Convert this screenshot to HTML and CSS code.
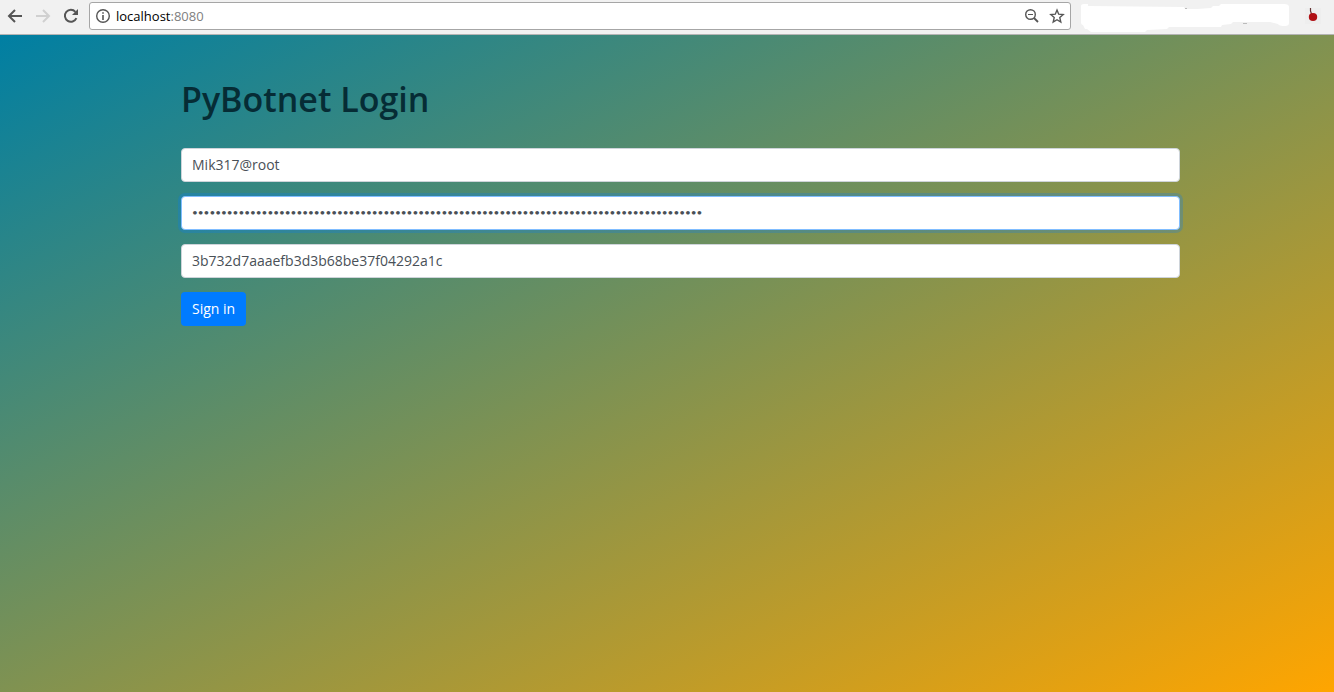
FILE: index.html
```html
<!DOCTYPE html>
<html lang="en">
<head>
<meta charset="utf-8">
<meta name="viewport" content="width=device-width, initial-scale=1">
<title>PyBotnet Login</title>
<link rel="stylesheet" href="styles.css">
</head>
<body>
<header class="toolbar">
  <nav class="nav" aria-label="Browser">
    <button class="tool" type="button" aria-label="Back"><svg width="16" height="16" viewBox="0 0 16 16"><path d="M15 8H2M8 2L2 8l6 6" fill="none" stroke="#555" stroke-width="2"/></svg></button>
    <button class="tool" type="button" aria-label="Forward" disabled><svg width="16" height="16" viewBox="0 0 16 16"><path d="M1 8h13M8 2l6 6-6 6" fill="none" stroke="#d0d0d0" stroke-width="2"/></svg></button>
    <button class="tool" type="button" aria-label="Reload"><svg width="16" height="16" viewBox="0 0 16 16"><path d="M13.4 10.2A6 6 0 1 1 12.4 3.8" fill="none" stroke="#555" stroke-width="2"/><path d="M15 1v6H9z" fill="#555"/></svg></button>
  </nav>
  <div class="address">
    <svg width="16" height="16" viewBox="0 0 16 16"><circle cx="8" cy="8" r="6.3" fill="none" stroke="#555" stroke-width="1.4"/><path d="M7.2 4.2h1.6v1.6H7.2zM7.2 7h1.6v5H7.2z" fill="#555"/></svg>
    <span class="url">localhost<span class="port">:8080</span></span>
    <button class="tool" type="button" aria-label="Zoom"><svg width="16" height="16" viewBox="0 0 16 16"><circle cx="6.5" cy="6.5" r="4.8" fill="none" stroke="#555" stroke-width="1.4"/><path d="M4 6.5h5" stroke="#555"/><path d="M10 10l4 4" stroke="#555" stroke-width="1.8"/></svg></button>
    <button class="tool" type="button" aria-label="Bookmark"><svg width="16" height="16" viewBox="0 0 16 16"><path d="M8 2l1.7 4.2 4.5.4-3.4 3 1 4.4L8 11.7 4.2 14l1-4.4-3.4-3 4.5-.4z" fill="none" stroke="#555" stroke-width="1.4"/></svg></button>
  </div>
  <svg class="patch" width="208" height="32" viewBox="0 0 208 32"><path d="M0 6q0-2 3-2h4v2l96 1 1 2h12l14-1 2-2h6l2-2h63q5 0 5 3v16q0 3-4 3-6 0-7-2l-8-2h-37l-2 2-9 1-1 2H88l-2 2-20 1-2 2H10l-4-3H4l-2-4q-2 0-2-3z" fill="#fff"/><path d="M104 8.500h2M162 23.500h4" stroke="#bbb"/></svg>
  <button class="tool extension" type="button" aria-label="Extension"><svg width="16" height="16" viewBox="0 0 16 16"><path d="M0 0h16v16H0z" fill="#eee"/><path d="M5.500 0v3l1 3" fill="none" stroke="#633" stroke-width="1.200"/><ellipse cx="8" cy="9" rx="4.200" ry="4" fill="#b01015"/></svg></button>
</header>
<main class="page">
  <div class="container">
    <h1 class="title">PyBotnet Login</h1>
    <form class="form">
      <input class="field" type="text" aria-label="Username" value="Mik317@root">
      <input class="field password" type="password" aria-label="Password" value="0123456789012345678901234567890123456789012345678901234567890123456789012345678901234567">
      <input class="field" type="text" aria-label="Token" value="3b732d7aaaefb3d3b68be37f04292a1c">
      <button class="submit" type="submit">Sign in</button>
    </form>
  </div>
</main>
</body>
</html>
```
FILE: styles.css
```css
* { box-sizing: border-box; }

body {
  margin: 0;
  min-height: 100vh;
  display: flex;
  flex-direction: column;
  font-family: "Segoe UI", "Open Sans", "Noto Sans", sans-serif;
  font-size: 14px;
}

svg { display: block; }

.toolbar {
  display: flex;
  align-items: center;
  height: 35px;
  padding: 0 13px 3px 7px;
  background: #f1f1f1;
  border-bottom: 1px solid #b4b4b4;
}

.nav {
  display: flex;
  gap: 12px;
  margin-right: 10px;
}

.tool {
  padding: 0;
  border: 0;
  background: none;
}

.address {
  flex: 1;
  display: flex;
  align-items: center;
  height: 28px;
  padding: 0 5px;
  gap: 9px;
  background: #fff;
  border: 1px solid #a6a6a6;
  border-radius: 3px;
}

.url {
  flex: 1;
  margin-left: -4px;
  font-size: 13px;
  color: #000;
}

.port { color: #808080; }

.patch { margin-left: 10px; }

.extension { margin-left: 16px; }

.page {
  flex: 1;
  background: linear-gradient(to bottom right, #007fa3, #ffa500);
}

.container {
  max-width: 1026px;
  margin: 0 auto;
  padding: 43px 0 0 27px;
}

.title {
  margin: 0 0 27px;
  font-size: 34px;
  font-weight: 600;
  line-height: 43px;
  color: #062c35;
}

.form {
  display: flex;
  flex-direction: column;
  align-items: flex-start;
  gap: 14px;
}

.field {
  width: 100%;
  height: 34px;
  padding: 0 10px 2px;
  font: inherit;
  color: #495057;
  background: #fff;
  border: 1px solid #ced4da;
  border-radius: 4px;
  outline: 0;
}

.password {
  font-family: Lato, sans-serif;
  font-size: 10px;
  border-color: #80bdff;
  box-shadow: 0 0 0 3px rgba(0, 123, 255, 0.25);
}

.submit {
  height: 34px;
  padding: 0 11px 2px;
  font: inherit;
  color: #fff;
  background: #007bff;
  border: 0;
  border-radius: 4px;
}
```
